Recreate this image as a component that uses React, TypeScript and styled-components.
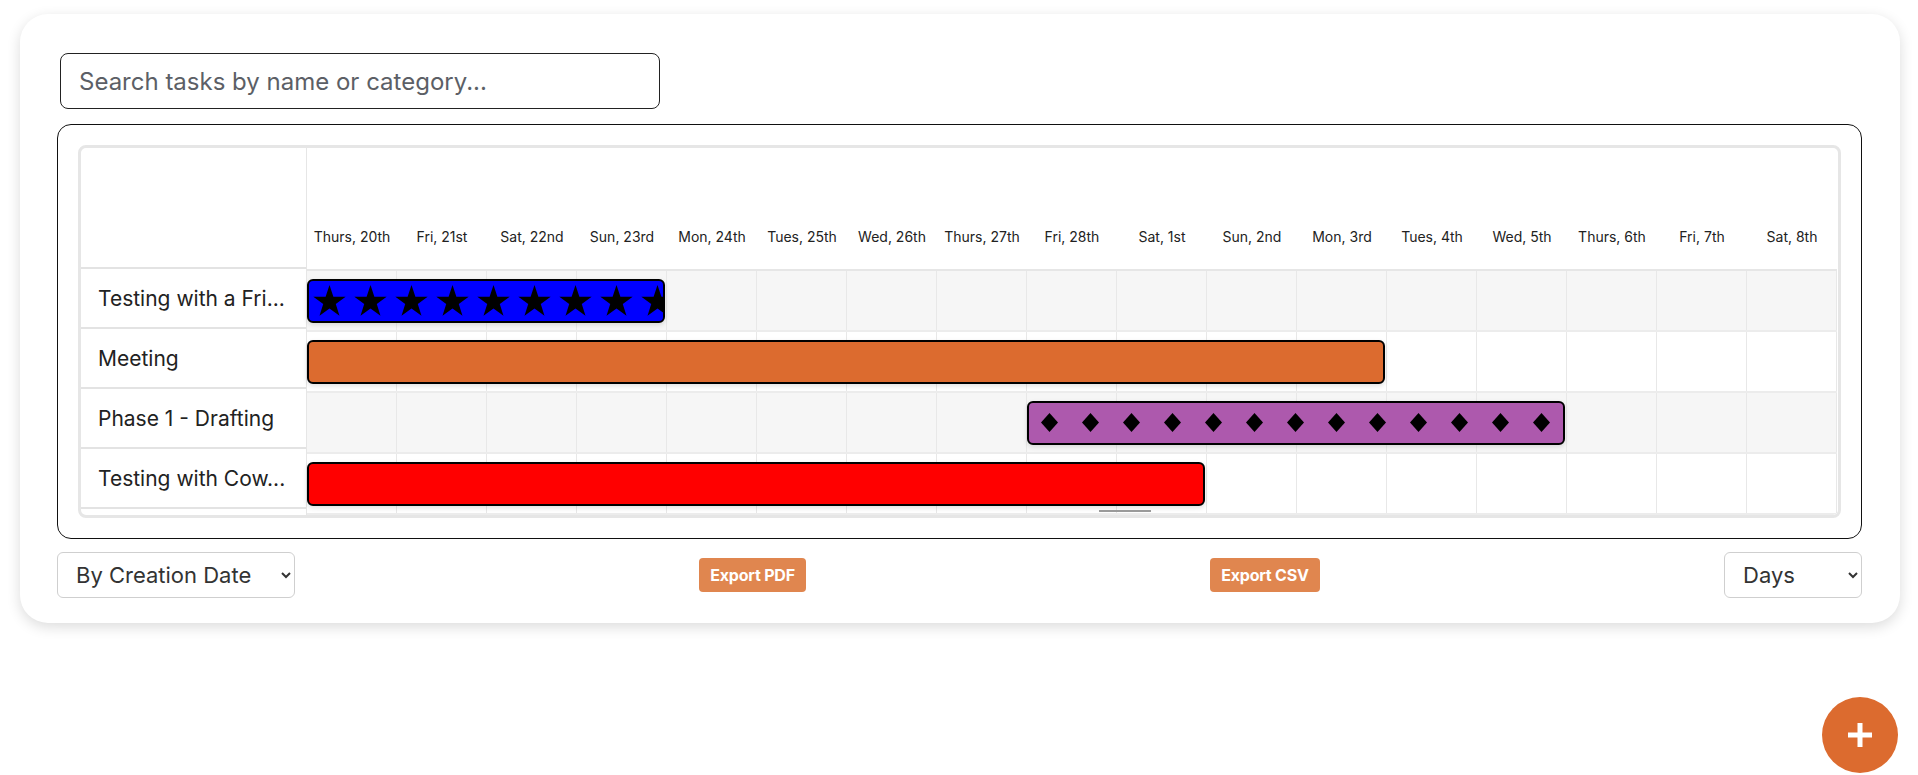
import { useLayoutEffect } from 'react'
import styled, { createGlobalStyle } from 'styled-components'

const GlobalStyle = createGlobalStyle`
  html {
    overflow-y: scroll;
  }
  body {
    margin: 0;
    background: #fff;
    color: #222;
    font-family: Inter, 'Noto Sans', sans-serif;
  }
  * {
    box-sizing: border-box;
  }
`

const COL = 90

const days = [
  'Thurs, 20th', 'Fri, 21st', 'Sat, 22nd', 'Sun, 23rd', 'Mon, 24th', 'Tues, 25th',
  'Wed, 26th', 'Thurs, 27th', 'Fri, 28th', 'Sat, 1st', 'Sun, 2nd', 'Mon, 3rd',
  'Tues, 4th', 'Wed, 5th', 'Thurs, 6th', 'Fri, 7th', 'Sat, 8th',
]

type Pattern = 'stars' | 'diamonds'

type Task = {
  id: string
  name: string
  color: string
  start: number
  span: number
  pattern?: Pattern
}

const tasks: Task[] = [
  { id: 't1', name: 'Testing with a Fri...', color: '#0000ff', start: 0, span: 4, pattern: 'stars' },
  { id: 't2', name: 'Meeting', color: '#dc6b2f', start: 0, span: 12 },
  { id: 't3', name: 'Phase 1 - Drafting', color: '#ad59ad', start: 8, span: 6, pattern: 'diamonds' },
  { id: 't4', name: 'Testing with Cow...', color: '#ff0000', start: 0, span: 10 },
]

const Page = styled.div`
  padding: 194px 0 152px 20px;
`

const Card = styled.div`
  width: calc(100vw - 38px);
  background: #fff;
  border-radius: 28px;
  box-shadow: 0 4px 14px rgba(0, 0, 0, 0.14);
  padding: 39px 38px 25px 37px;
  display: flex;
  flex-direction: column;
`

const SearchInput = styled.input`
  width: 600px;
  height: 56px;
  margin: 0 0 15px 3px;
  padding: 0 18px;
  border: 1px solid #222;
  border-radius: 8px;
  font-family: Inter, sans-serif;
  font-size: 24px;
  color: #222;
  outline: none;

  &::placeholder {
    color: #5c5f66;
  }
`

const GanttBox = styled.div`
  border: 1px solid #111;
  border-radius: 14px;
  padding: 20px;
  margin-bottom: 13px;
`

const GanttInner = styled.div`
  display: flex;
  border: 3px solid #e6e6e6;
  border-radius: 8px;
  overflow: hidden;
  background: #fff;
`

const TaskList = styled.div`
  width: 226px;
  flex-shrink: 0;
  border-right: 1px solid #e6e6e6;
`

const TaskListHeader = styled.div`
  height: 121px;
  border-bottom: 2px solid #e3e3e3;
`

const TaskName = styled.div`
  height: 60px;
  display: flex;
  align-items: center;
  padding-left: 17px;
  border-bottom: 2px solid #e3e3e3;
  font-size: 21px;
  color: #222;
  white-space: nowrap;
  overflow: hidden;
`

const Grid = styled.div`
  width: ${COL * days.length}px;
  position: relative;
`

const GridHeader = styled.div`
  height: 123px;
  display: grid;
  grid-template-columns: repeat(${days.length}, ${COL}px);
  align-items: end;
  padding-bottom: 24px;
  border-bottom: 2px solid #e6e6e6;
`

const DayLabel = styled.span`
  text-align: center;
  font-size: 14px;
  color: #222;
  white-space: nowrap;
`

const GridRow = styled.div<{ $shaded: boolean }>`
  height: 61px;
  display: grid;
  grid-template-columns: repeat(${days.length}, ${COL}px);
  align-items: start;
  background-color: ${(p) => (p.$shaded ? '#f6f6f6' : '#fff')};
  background-image: repeating-linear-gradient(
    to right,
    transparent 0 ${COL - 1}px,
    #e8e8e8 ${COL - 1}px ${COL}px
  );
  border-bottom: 2px solid #ececec;
`

const Bar = styled.div<{ $color: string }>`
  height: 44px;
  margin: 8px 2px 0 0;
  border: 2px solid #000;
  border-radius: 6px;
  background: ${(p) => p.$color};
  box-shadow: 0 2px 5px rgba(0, 0, 0, 0.12);
  overflow: hidden;

  svg {
    display: block;
  }
`

const ScrollMark = styled.div`
  position: absolute;
  left: 792px;
  bottom: 3px;
  width: 52px;
  height: 2px;
  background: #9a9a9a;
`

const Controls = styled.div`
  display: flex;
  justify-content: space-between;
  align-items: center;
`

const Select = styled.select<{ $width: number }>`
  width: ${(p) => p.$width}px;
  height: 46px;
  padding: 0 10px 0 14px;
  border: 1px solid #cfcfcf;
  border-radius: 6px;
  background: #fff;
  font-family: Inter, sans-serif;
  font-size: 22px;
  color: #333;
`

const ExportButton = styled.button`
  height: 34px;
  padding: 0 11px;
  border: none;
  border-radius: 4px;
  background: #e0864f;
  color: #fff;
  font-family: Inter, sans-serif;
  font-weight: 700;
  font-size: 16px;
  letter-spacing: -0.2px;
`

const Fab = styled.button`
  position: fixed;
  left: calc(100vw - 96px);
  bottom: 2px;
  width: 76px;
  height: 76px;
  border: none;
  border-radius: 50%;
  background: #dc6b2f;
  display: flex;
  align-items: center;
  justify-content: center;
  padding: 0;
`

const starPoints = (cx: number, cy: number, r: number, inner: number) => {
  const pts: string[] = []
  for (let i = 0; i < 10; i++) {
    const rad = i % 2 === 0 ? r : inner
    const a = -Math.PI / 2 + (i * Math.PI) / 5
    pts.push(`${(cx + rad * Math.cos(a)).toFixed(2)},${(cy + rad * Math.sin(a)).toFixed(2)}`)
  }
  return pts.join(' ')
}

const BarPattern = ({ id, kind }: { id: string; kind: Pattern }) => (
  <svg width="100%" height="40">
    <defs>
      <pattern id={id} width="41" height="40" patternUnits="userSpaceOnUse">
        {kind === 'stars' ? (
          <polygon points={starPoints(20.5, 21, 17, 6.6)} fill="#000" />
        ) : (
          <polygon points="20.5,10 29,19.5 20.5,29 12,19.5" fill="#000" />
        )}
      </pattern>
    </defs>
    <rect width="100%" height="40" fill={`url(#${id})`} />
  </svg>
)

const App = () => {
  useLayoutEffect(() => {
    window.scrollTo(0, 181)
  }, [])

  return (
    <Page>
      <GlobalStyle />
      <Card>
        <SearchInput placeholder="Search tasks by name or category..." />
        <GanttBox>
          <GanttInner>
            <TaskList>
              <TaskListHeader />
              {tasks.map((t) => (
                <TaskName key={t.id}>{t.name}</TaskName>
              ))}
            </TaskList>
            <Grid>
              <GridHeader>
                {days.map((d) => (
                  <DayLabel key={d}>{d}</DayLabel>
                ))}
              </GridHeader>
              {tasks.map((t, i) => (
                <GridRow key={t.id} $shaded={i % 2 === 0}>
                  <Bar
                    $color={t.color}
                    style={{ gridColumn: `${t.start + 1} / span ${t.span}` }}
                  >
                    {t.pattern && <BarPattern id={`pat-${t.id}`} kind={t.pattern} />}
                  </Bar>
                </GridRow>
              ))}
              <ScrollMark />
            </Grid>
          </GanttInner>
        </GanttBox>
        <Controls>
          <Select $width={238} defaultValue="created">
            <option value="created">By Creation Date</option>
            <option value="start">By Start Date</option>
          </Select>
          <ExportButton>Export PDF</ExportButton>
          <ExportButton>Export CSV</ExportButton>
          <Select $width={138} defaultValue="days">
            <option value="days">Days</option>
            <option value="weeks">Weeks</option>
          </Select>
        </Controls>
      </Card>
      <Fab aria-label="Add task">
        <svg width="28" height="28" viewBox="0 0 28 28">
          <path d="M14 2v24M2 14h24" stroke="#fff" strokeWidth="5" />
        </svg>
      </Fab>
    </Page>
  )
}

export default App
